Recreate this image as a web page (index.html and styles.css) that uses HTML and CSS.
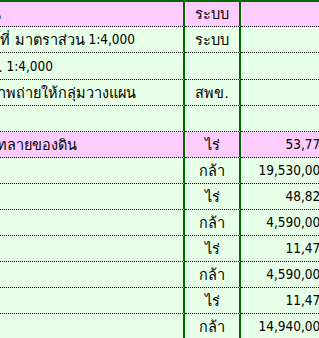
FILE: index.html
```html
<!DOCTYPE html>
<html lang="th">
<head>
<meta charset="utf-8">
<link rel="stylesheet" href="styles.css">
</head>
<body>
<div class="sheet">
  <div class="row pink first">
    <div class="a e0"><span class="th">ที่ดิน</span></div>
    <div class="b"><span class="th">ระบบ</span></div>
    <div class="c"></div>
  </div>
  <div class="row">
    <div class="a e1"><span class="th">อากาศที่ มาตราส่วน</span>&nbsp;1:4,000</div>
    <div class="b"><span class="th">ระบบ</span></div>
    <div class="c"></div>
  </div>
  <div class="row tall">
    <div class="a e2"><span class="th">ม.</span>&nbsp;1:4,000</div>
    <div class="b"></div>
    <div class="c"></div>
  </div>
  <div class="row">
    <div class="a e3"><span class="th">ภาพถ่ายให้กลุ่มวางแผน</span></div>
    <div class="b"><span class="th">สพข.</span></div>
    <div class="c"></div>
  </div>
  <div class="row">
    <div class="a"></div>
    <div class="b"></div>
    <div class="c"></div>
  </div>
  <div class="row pink">
    <div class="a e5"><span class="th">พังทลายของดิน</span></div>
    <div class="b"><span class="th">ไร่</span></div>
    <div class="c">53,775</div>
  </div>
  <div class="row">
    <div class="a"></div>
    <div class="b"><span class="th">กล้า</span></div>
    <div class="c">19,530,000</div>
  </div>
  <div class="row">
    <div class="a"></div>
    <div class="b"><span class="th">ไร่</span></div>
    <div class="c">48,825</div>
  </div>
  <div class="row">
    <div class="a"></div>
    <div class="b"><span class="th">กล้า</span></div>
    <div class="c">4,590,000</div>
  </div>
  <div class="row">
    <div class="a"></div>
    <div class="b"><span class="th">ไร่</span></div>
    <div class="c">11,475</div>
  </div>
  <div class="row">
    <div class="a"></div>
    <div class="b"><span class="th">กล้า</span></div>
    <div class="c">4,590,000</div>
  </div>
  <div class="row">
    <div class="a"></div>
    <div class="b"><span class="th">ไร่</span></div>
    <div class="c">11,475</div>
  </div>
  <div class="row">
    <div class="a"></div>
    <div class="b"><span class="th">กล้า</span></div>
    <div class="c">14,940,000</div>
  </div>
</div>
</body>
</html>
```

FILE: styles.css
```css
html, body {
  margin: 0;
  padding: 0;
  overflow: hidden;
  background: #e6ffe6;
}
body {
  width: 319px;
  height: 338px;
  font-family: "DejaVu Sans Condensed", "DejaVu Sans", sans-serif;
  font-size: 13.5px;
  color: #000;
}
.th {
  font-size: 14.5px;
  line-height: 1;
  flex: none;
}
.sheet {
  border-top: 2px solid #006600;
  width: 340px;
}
.row {
  display: grid;
  grid-template-columns: 185px 56px 88px;
  height: 26px;
  background: #e6ffe6;
}
.row.first { height: 25px; }
.row.tall { height: 27px; }
.row.pink { background: #ffccff; }
.row > div {
  border-bottom: 1px dotted #000;
  display: flex;
  align-items: flex-end;
  padding-bottom: 5px;
  box-sizing: border-box;
  white-space: nowrap;
  overflow: hidden;
  line-height: 16px;
}
.a {
  border-right: 2px solid #006600;
  justify-content: flex-end;
}
.b {
  border-right: 2px solid #006600;
  justify-content: center;
}
.c {
  justify-content: flex-end;
  padding-right: 1px;
}
.e0 { padding-right: 182px; }
.e1 { padding-right: 48px; }
.e2 { padding-right: 130px; }
.e3 { padding-right: 47px; }
.e5 { padding-right: 106px; }
```
